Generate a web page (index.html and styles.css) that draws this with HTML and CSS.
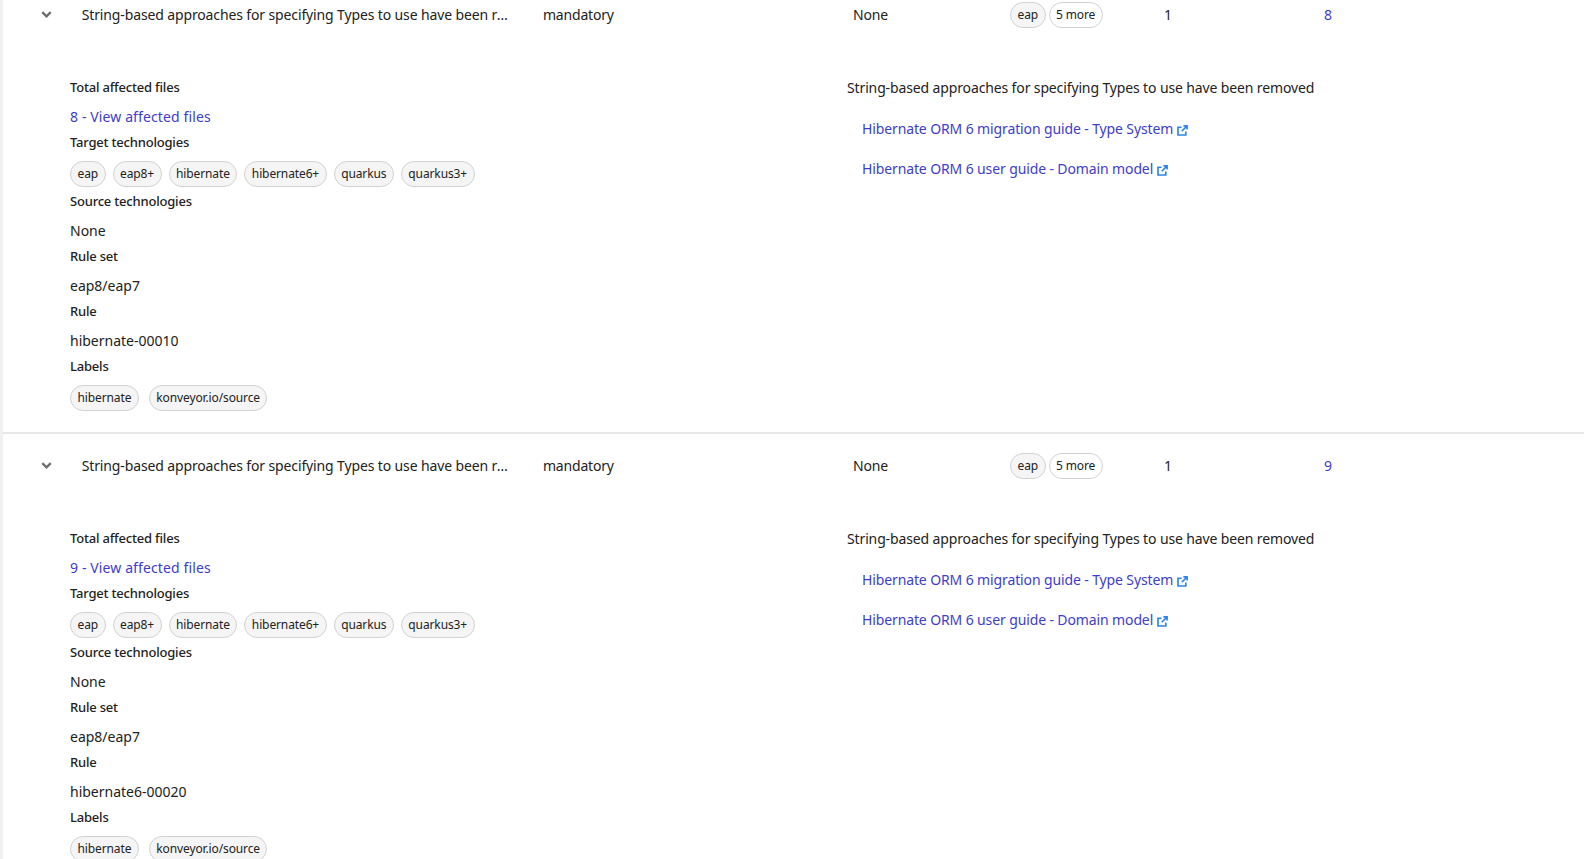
FILE: index.html
```html
<!DOCTYPE html>
<html lang="en">
<head>
<meta charset="utf-8">
<title>Issues</title>
<link rel="stylesheet" href="styles.css">
</head>
<body>
<main class="table">
  <section class="row">
    <div class="summary">
      <span class="toggle"><svg viewBox="0 0 12 8" width="11" height="7"><path d="M1.2 1.4 6 6 10.8 1.4" fill="none" stroke="#6a6e73" stroke-width="2.7"/></svg></span>
      <span class="cell title">String-based approaches for specifying Types to use have been removed</span>
      <span class="cell category">mandatory</span>
      <span class="cell source">None</span>
      <span class="cell targets"><span class="chip">eap</span><span class="chip outline">5 more</span></span>
      <span class="cell incidents">1</span>
      <a class="cell files link" href="#">8</a>
    </div>
    <div class="details">
      <div class="facts">
        <h4 class="label">Total affected files</h4>
        <a class="value link affected" href="#">8 - View affected files</a>
        <h4 class="label">Target technologies</h4>
        <div class="chips value"><span class="chip">eap</span><span class="chip">eap8+</span><span class="chip">hibernate</span><span class="chip">hibernate6+</span><span class="chip">quarkus</span><span class="chip">quarkus3+</span></div>
        <h4 class="label">Source technologies</h4>
        <div class="value">None</div>
        <h4 class="label">Rule set</h4>
        <div class="value">eap8/eap7</div>
        <h4 class="label">Rule</h4>
        <div class="value">hibernate-00010</div>
        <h4 class="label">Labels</h4>
        <div class="chips wide value"><span class="chip">hibernate</span><span class="chip">konveyor.io/source</span></div>
      </div>
      <div class="message">
        <p class="lead">String-based approaches for specifying Types to use have been removed</p>
        <ul class="refs">
          <li><a class="link" href="#">Hibernate ORM 6 migration guide - Type System<svg class="ext" viewBox="0 0 12 12" width="11" height="11"><path d="M9.6 7v3.9H1.1V2.4H5M7 1h4v4M11 1 5.2 6.8" fill="none" stroke="#2b84ee" stroke-width="1.8"/></svg></a></li>
          <li><a class="link" href="#">Hibernate ORM 6 user guide - Domain model<svg class="ext" viewBox="0 0 12 12" width="11" height="11"><path d="M9.6 7v3.9H1.1V2.4H5M7 1h4v4M11 1 5.2 6.8" fill="none" stroke="#2b84ee" stroke-width="1.8"/></svg></a></li>
        </ul>
      </div>
    </div>
  </section>
  <section class="row">
    <div class="summary">
      <span class="toggle"><svg viewBox="0 0 12 8" width="11" height="7"><path d="M1.2 1.4 6 6 10.8 1.4" fill="none" stroke="#6a6e73" stroke-width="2.7"/></svg></span>
      <span class="cell title">String-based approaches for specifying Types to use have been removed</span>
      <span class="cell category">mandatory</span>
      <span class="cell source">None</span>
      <span class="cell targets"><span class="chip">eap</span><span class="chip outline">5 more</span></span>
      <span class="cell incidents">1</span>
      <a class="cell files link" href="#">9</a>
    </div>
    <div class="details">
      <div class="facts">
        <h4 class="label">Total affected files</h4>
        <a class="value link affected" href="#">9 - View affected files</a>
        <h4 class="label">Target technologies</h4>
        <div class="chips value"><span class="chip">eap</span><span class="chip">eap8+</span><span class="chip">hibernate</span><span class="chip">hibernate6+</span><span class="chip">quarkus</span><span class="chip">quarkus3+</span></div>
        <h4 class="label">Source technologies</h4>
        <div class="value">None</div>
        <h4 class="label">Rule set</h4>
        <div class="value">eap8/eap7</div>
        <h4 class="label">Rule</h4>
        <div class="value">hibernate6-00020</div>
        <h4 class="label">Labels</h4>
        <div class="chips wide value"><span class="chip">hibernate</span><span class="chip">konveyor.io/source</span></div>
      </div>
      <div class="message">
        <p class="lead">String-based approaches for specifying Types to use have been removed</p>
        <ul class="refs">
          <li><a class="link" href="#">Hibernate ORM 6 migration guide - Type System<svg class="ext" viewBox="0 0 12 12" width="11" height="11"><path d="M9.6 7v3.9H1.1V2.4H5M7 1h4v4M11 1 5.2 6.8" fill="none" stroke="#2b84ee" stroke-width="1.8"/></svg></a></li>
          <li><a class="link" href="#">Hibernate ORM 6 user guide - Domain model<svg class="ext" viewBox="0 0 12 12" width="11" height="11"><path d="M9.6 7v3.9H1.1V2.4H5M7 1h4v4M11 1 5.2 6.8" fill="none" stroke="#2b84ee" stroke-width="1.8"/></svg></a></li>
        </ul>
      </div>
    </div>
  </section>
</main>
</body>
</html>
```
FILE: styles.css
```css
* { box-sizing: border-box; }
html, body { margin: 0; height: 100%; overflow: hidden; }
body {
  background: #f0f0f0;
  padding-left: 3px;
  color: #222;
  font: 14px/21px "Noto Sans", "Open Sans", sans-serif;
}
.table { background: #fff; margin-top: -17px; }
.row { border-bottom: 2px solid #e7e7e7; padding: 21px 0 17px; }
.row:last-child { border-bottom: 0; }
.summary { display: flex; align-items: center; height: 21px; }
.toggle { width: 78.7px; padding-left: 38px; display: flex; }
.cell { display: block; flex: none; white-space: nowrap; }
.title { width: 461.3px; overflow: hidden; text-overflow: ellipsis; padding-right: 30px; letter-spacing: -0.13px; }
.category { width: 310px; letter-spacing: -0.2px; }
.source { width: 157px; letter-spacing: -0.2px; }
.targets { width: 154px; display: flex; gap: 3px; }
.incidents { width: 160px; }
.link { color: #3d3dd0; text-decoration: none; }
.affected { letter-spacing: 0.12px; }
.details { display: flex; margin-top: 52px; padding-left: 67px; }
.facts { width: 777px; display: flex; flex-direction: column; align-items: flex-start; }
.label { margin: 0 0 8px; font-size: 13px; font-weight: 500; line-height: 21px; letter-spacing: -0.2px; }
.value { margin-bottom: 5px; }
.chips { display: flex; gap: 7px; margin-bottom: 4px; }
.chips.wide { gap: 10px; }
.label + .chips { height: 26px; }
.chip {
  display: inline-flex; align-items: center; height: 26px; padding: 0 6.5px;
  border: 1px solid #d2d2d2; border-radius: 13px; background: #f5f5f5;
  font-size: 12px; line-height: 18px; letter-spacing: -0.12px;
}
.chip.outline { background: #fff; }
.lead { margin: 0; letter-spacing: -0.13px; }
.refs { list-style: none; margin: 20px 0 0; padding: 0 0 0 15px; letter-spacing: -0.12px; }
.refs li { margin-bottom: 18.5px; }
.ext { margin-left: 4px; vertical-align: -2px; }
```
